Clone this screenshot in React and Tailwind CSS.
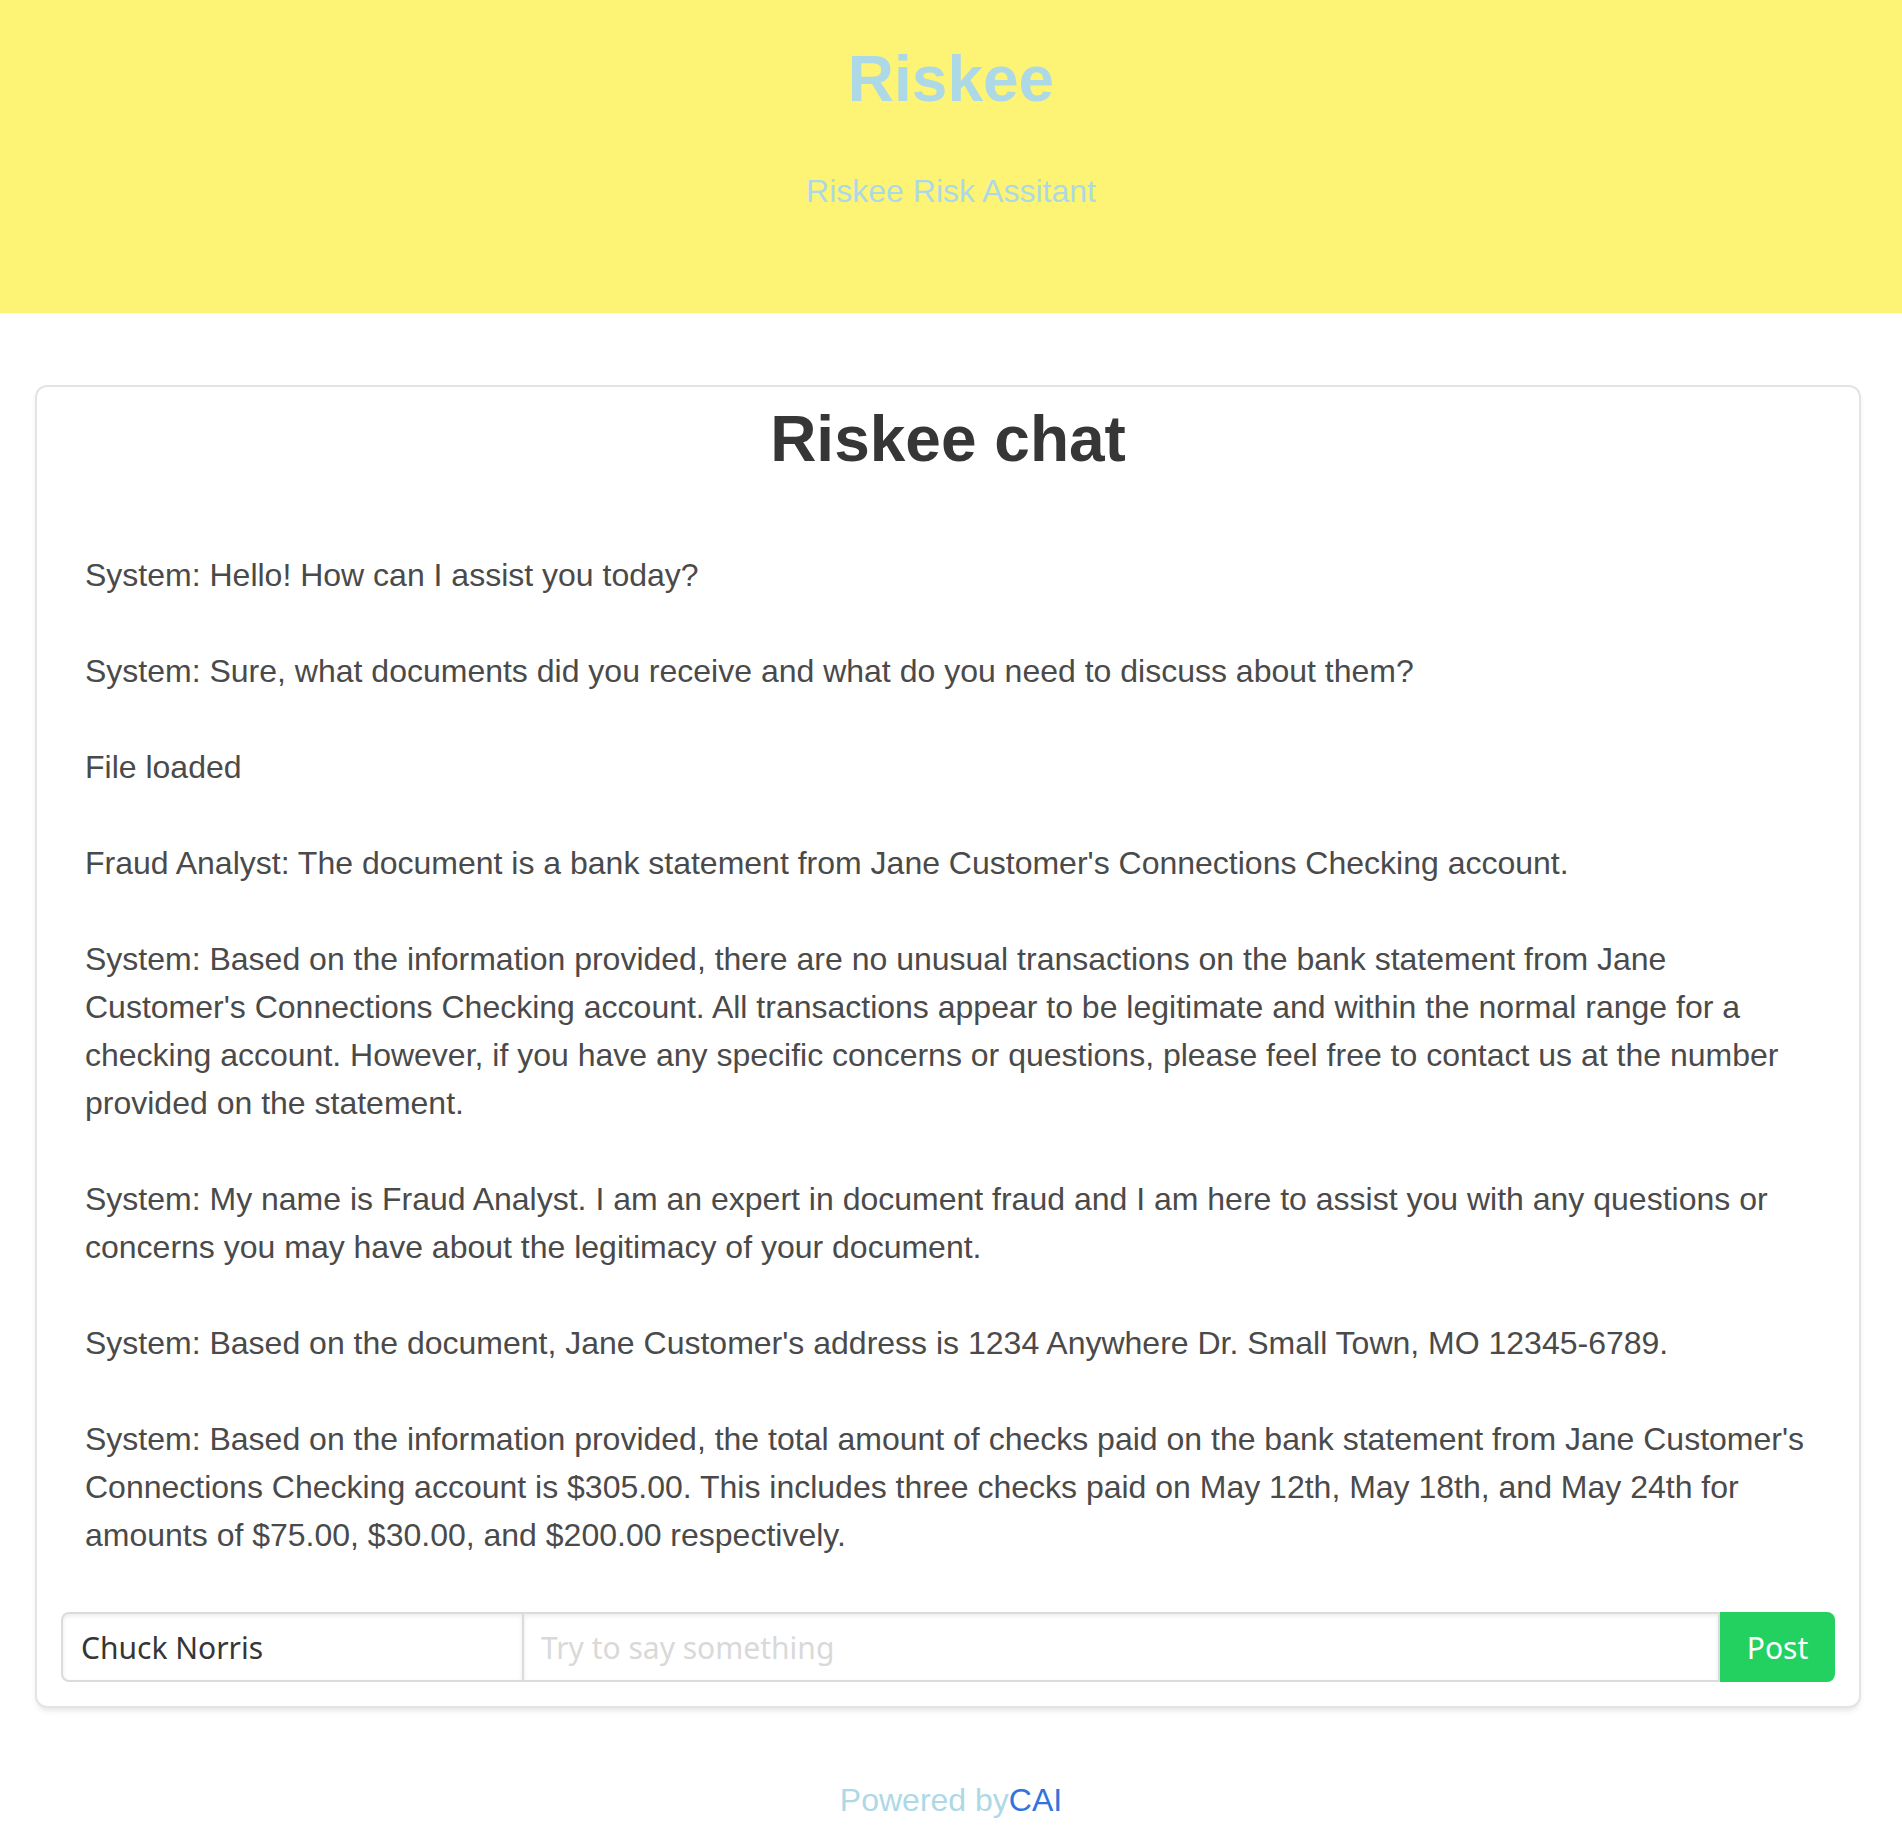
import React, { useState } from 'react';

const messages = [
  'System: Hello! How can I assist you today?',
  'System: Sure, what documents did you receive and what do you need to discuss about them?',
  'File loaded',
  "Fraud Analyst: The document is a bank statement from Jane Customer's Connections Checking account.",
  "System: Based on the information provided, there are no unusual transactions on the bank statement from Jane Customer's Connections Checking account. All transactions appear to be legitimate and within the normal range for a checking account. However, if you have any specific concerns or questions, please feel free to contact us at the number provided on the statement.",
  'System: My name is Fraud Analyst. I am an expert in document fraud and I am here to assist you with any questions or concerns you may have about the legitimacy of your document.',
  "System: Based on the document, Jane Customer's address is 1234 Anywhere Dr. Small Town, MO 12345-6789.",
  "System: Based on the information provided, the total amount of checks paid on the bank statement from Jane Customer's Connections Checking account is $305.00. This includes three checks paid on May 12th, May 18th, and May 24th for amounts of $75.00, $30.00, and $200.00 respectively.",
];

const App = () => {
  const [name, setName] = useState('Chuck Norris');
  const [text, setText] = useState('');

  return (
    <div className="min-h-screen bg-white font-['Liberation_Sans',Arial,sans-serif] text-[#4a4a4a]">
      {/* header */}
      <section className="bg-[#fdf476] pt-[43px] pb-[98px] text-center">
        <h1 className="text-[64px] leading-[72px] font-bold text-[#add8e6]">Riskee</h1>
        <h2 className="mt-[52px] text-[32px] leading-[48px] text-[#add8e6]">Riskee Risk Assitant</h2>
      </section>

      {/* chat card */}
      <div className="mt-[72px] ml-[35px] mr-[41px] rounded-[12px] border-2 border-[#e4e4e4] bg-white px-6 pt-4 pb-6 shadow-[0_4px_6px_-2px_rgba(10,10,10,0.12)]">
        <h1 className="text-center text-[64px] leading-[72px] font-bold text-[#363636]">Riskee chat</h1>

        <div className="mt-[76px] flex flex-col gap-12 px-6 text-[32px] leading-[48px]">
          {messages.map((m, i) => (
            <p key={i}>{m}</p>
          ))}
        </div>

        <form
          className="mt-[53px] flex h-[70px] font-['Noto_Sans',sans-serif]"
          onSubmit={(e) => e.preventDefault()}
        >
          <input
            value={name}
            onChange={(e) => setName(e.target.value)}
            className="h-full w-[463px] shrink-0 rounded-l-[8px] border-2 border-[#dbdbdb] bg-white px-[18px] text-[30px] text-[#363636] shadow-[inset_0_2px_4px_rgba(10,10,10,0.08)] outline-none"
          />
          <input
            value={text}
            onChange={(e) => setText(e.target.value)}
            placeholder="Try to say something"
            className="h-full min-w-0 flex-1 border-2 border-l-0 border-[#dbdbdb] bg-white px-[17px] text-[30px] text-[#363636] shadow-[inset_0_2px_4px_rgba(10,10,10,0.08)] outline-none placeholder:text-[#d9d9d9]"
          />
          <button
            type="submit"
            className="h-full w-[115px] shrink-0 rounded-r-[8px] bg-[#23d160] text-[30px] text-white"
          >
            Post
          </button>
        </form>
      </div>

      {/* footer */}
      <footer className="mt-[68px] pb-[11px] text-center text-[32px] leading-[48px]">
        <span className="text-[#add8e6]">Powered by</span>
        <a href="#" className="text-[#3273dc]">CAI</a>
      </footer>
    </div>
  );
};

export default App;
